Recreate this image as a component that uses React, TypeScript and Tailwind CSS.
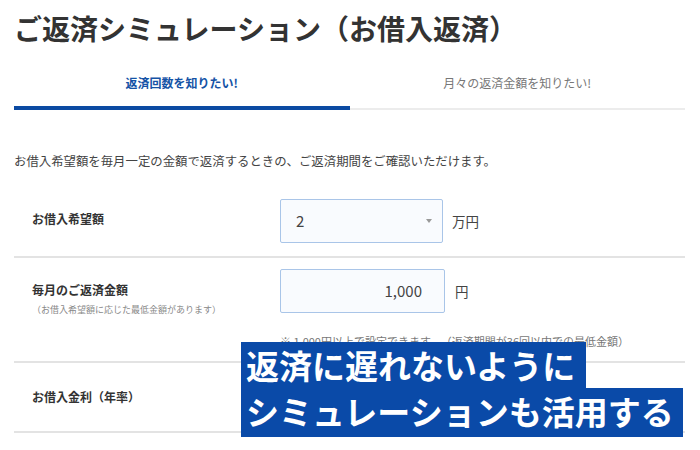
import React from "react";

const font = { fontFamily: '"Noto Sans CJK JP", "Noto Sans", sans-serif' };

export default function App() {
  return (
    <div className="relative w-[700px] h-[450px] overflow-hidden bg-white text-[#333]" style={font}>
      <div className="px-[14px]" style={{ marginRight: 1 }}>
        {/* Title */}
        <h1 className="pt-[10px] pb-[10px] text-[28px] leading-[36px] font-bold text-[#333] whitespace-nowrap">
          ご返済シミュレーション（お借入返済）
        </h1>

        {/* Tabs */}
        <div className="flex">
          <div className="flex-1 h-[54px] flex items-center justify-center border-b-4 border-[#0b4aa2] pt-[3px] text-[12px] font-bold text-[#1553a6]">
            返済回数を知りたい!
          </div>
          <div className="flex-1 h-[54px] flex items-center justify-center text-[12px] text-[#777] border-b-2 border-[#ececec] pt-[2px]">
            月々の返済金額を知りたい!
          </div>
        </div>

        {/* Description */}
        <p className="mt-[42px] text-[12.4px] leading-[18px] text-[#444] whitespace-nowrap">
          お借入希望額を毎月一定の金額で返済するときの、ご返済期間をご確認いただけます。
        </p>

        {/* Row 1 */}
        <div className="flex items-center pt-[29px] pb-[13px] border-b-2 border-[#e3e3e3]">
          <div className="w-[266px] pl-[18px] text-[12px] font-bold text-[#333] -mt-[4px]">お借入希望額</div>
          <div className="w-[163px] h-[44px] border border-[#a9c5e8] bg-[#f9fbfe] rounded-[2px] flex items-center justify-between pl-[15px] pr-[10px]">
            <span className="text-[15px] text-[#444]">2</span>
            <span className="w-0 h-0 border-l-[3.5px] border-r-[3.5px] border-t-[4px] border-l-transparent border-r-transparent border-t-[#999]"></span>
          </div>
          <span className="ml-[9px] text-[13.5px] text-[#444]">万円</span>
        </div>

        {/* Row 2 */}
        <div className="flex pt-[11px] pb-[13px] border-b-2 border-[#e3e3e3]">
          <div className="w-[266px] pl-[18px] pt-[12px]">
            <div className="text-[12px] font-bold text-[#333] leading-[18px]">毎月のご返済金額</div>
            <div className="mt-[5px] text-[9px] text-[#888] leading-[12px] whitespace-nowrap">（お借入希望額に応じた最低金額があります）</div>
          </div>
          <div>
            <div className="flex items-center">
              <div className="w-[165px] h-[44px] border border-[#a9c5e8] bg-[#f9fbfe] rounded-[2px] flex items-center justify-end pr-[22px]">
                <span className="text-[15px] text-[#444]">1,000</span>
              </div>
              <span className="ml-[10px] text-[13.5px] text-[#444]">円</span>
            </div>
            <div className="mt-[21px] text-[11px] leading-[14px] text-[#777] whitespace-nowrap">
              ※ 1,000円以上で設定できます。　（返済期間が36回以内での最低金額）
            </div>
          </div>
        </div>

        {/* Row 3 */}
        <div className="h-[70px] flex items-center border-b-2 border-[#e3e3e3]">
          <div className="pl-[18px] text-[12px] font-bold text-[#333]">お借入金利（年率）</div>
        </div>
      </div>

      {/* Overlay caption */}
      <div className="absolute left-[241px] top-[342px] flex flex-col items-start text-white font-bold text-[33px]">
        <div className="h-[46px] leading-[46px] bg-[#0a4aa8] pl-[5px] pr-[11px] whitespace-nowrap">返済に遅れないように</div>
        <div className="h-[49px] leading-[47px] bg-[#0a4aa8] pl-[5px] pr-[9px] whitespace-nowrap">シミュレーションも活用する</div>
      </div>
    </div>
  );
}
